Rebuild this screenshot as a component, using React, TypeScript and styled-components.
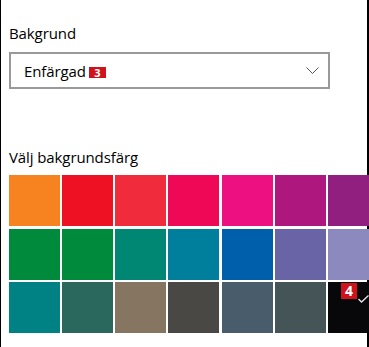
import React from "react";
import styled, { createGlobalStyle } from "styled-components";

const GlobalStyle = createGlobalStyle`
  html, body {
    margin: 0;
    padding: 0;
    background: #ffffff;
    overflow: hidden;
  }
  body {
    font-family: "Open Sans", "Noto Sans", "Liberation Sans", sans-serif;
    color: #000000;
  }
`;

const Panel = styled.div`
  width: 369px;
  height: 347px;
  box-sizing: border-box;
  border-left: 1px solid #000;
  border-right: 2px solid #000;
  padding: 23px 0 0 8px;
  background: #fff;
`;

const Label = styled.div<{ $gap?: number }>`
  font-size: 15px;
  line-height: 20px;
  letter-spacing: -0.1px;
  margin-top: ${(p) => p.$gap ?? 0}px;
  color: #000;
`;

const SelectBox = styled.div`
  margin-top: 9px;
  width: 321px;
  height: 37px;
  box-sizing: border-box;
  border: 2px solid #999999;
  display: flex;
  align-items: center;
  justify-content: space-between;
  padding: 0 9px 0 13px;
  background: #fff;
`;

const SelectValue = styled.div`
  display: flex;
  align-items: center;
  font-size: 15px;
  line-height: 20px;
  letter-spacing: -0.1px;
`;

const SmallBadge = styled.span`
  display: inline-flex;
  align-items: center;
  justify-content: center;
  margin-left: 3px;
  margin-top: 4px;
  width: 17px;
  height: 11px;
  background: #d0121b;
  color: #fff;
  font-weight: 700;
  font-size: 11px;
  line-height: 11px;
`;

const Grid = styled.div`
  margin-top: 8px;
  display: grid;
  grid-template-columns: repeat(7, 51px);
  grid-auto-rows: 51px;
  column-gap: 2.17px;
  row-gap: 2.5px;
  width: 361px;
`;

const Swatch = styled.div<{ $color: string }>`
  position: relative;
  background: ${(p) => p.$color};
`;

const BigBadge = styled.span`
  position: absolute;
  left: 13px;
  top: 1px;
  width: 16px;
  height: 16px;
  background: #d0121b;
  color: #fff;
  font-weight: 700;
  font-size: 14px;
  line-height: 16px;
  text-align: center;
`;

const Check = styled.svg`
  position: absolute;
  left: 30px;
  top: 13px;
`;

const colors = [
  "#f78220", "#ee1124", "#ef2b3c", "#ef0855", "#ec1080", "#ae187e", "#911f80",
  "#008a3c", "#008a3c", "#008774", "#007f9c", "#005faa", "#6864a6", "#8b89be",
  "#008285", "#2a675d", "#857561", "#4a4844", "#485c6c", "#455457", "#08080a",
];

export default function App() {
  return (
    <>
      <GlobalStyle />
      <Panel>
        <Label>Bakgrund</Label>
        <SelectBox>
          <SelectValue>
            Enfärgad<SmallBadge>3</SmallBadge>
          </SelectValue>
          <svg width="13" height="7" viewBox="0 0 13 7">
            <path d="M0.5 0.5 L6.5 6.5 L12.5 0.5" fill="none" stroke="#555" strokeWidth="1" />
          </svg>
        </SelectBox>
        <Label $gap={58}>Välj bakgrundsfärg</Label>
        <Grid>
          {colors.map((c, i) => (
            <Swatch key={i} $color={c}>
              {i === colors.length - 1 && (
                <>
                  <BigBadge>4</BigBadge>
                  <Check width="11" height="8" viewBox="0 0 11 8">
                    <path d="M0.5 4 L3.5 7 L10.5 0.5" fill="none" stroke="#e6e6e6" strokeWidth="1.3" />
                  </Check>
                </>
              )}
            </Swatch>
          ))}
        </Grid>
      </Panel>
    </>
  );
}
